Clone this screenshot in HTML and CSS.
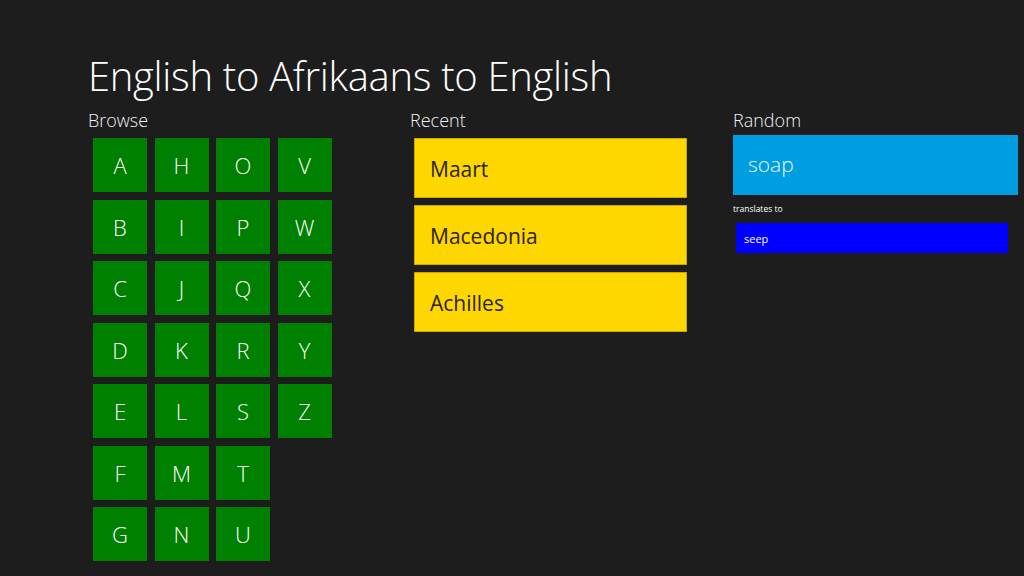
FILE: index.html
```html
<!DOCTYPE html>
<html lang="en">
<head>
    <meta charset="UTF-8">
    <title>English to Afrikaans to English</title>
    <link rel="stylesheet" href="styles.css">
</head>
<body>
    <div class="page">
        <h1 class="title">English to Afrikaans to English</h1>

        <div class="sections">
            <section class="browse">
                <h2>Browse</h2>
                <div class="letters">
                    <div class="letter">A</div><div class="letter">B</div><div class="letter">C</div><div class="letter">D</div><div class="letter">E</div><div class="letter">F</div><div class="letter">G</div>
                    <div class="letter">H</div><div class="letter">I</div><div class="letter">J</div><div class="letter">K</div><div class="letter">L</div><div class="letter">M</div><div class="letter">N</div>
                    <div class="letter">O</div><div class="letter">P</div><div class="letter">Q</div><div class="letter">R</div><div class="letter">S</div><div class="letter">T</div><div class="letter">U</div>
                    <div class="letter">V</div><div class="letter">W</div><div class="letter">X</div><div class="letter">Y</div><div class="letter">Z</div>
                </div>
            </section>

            <section class="recent">
                <h2>Recent</h2>
                <div class="word">Maart</div>
                <div class="word">Macedonia</div>
                <div class="word">Achilles</div>
            </section>

            <section class="random">
                <h2>Random</h2>
                <div class="source">soap</div>
                <div class="label">translates to</div>
                <div class="target">seep</div>
            </section>
        </div>
    </div>
</body>
</html>
```

FILE: styles.css
```css
/* Global reset */
* {
    margin: 0;
    padding: 0;
    box-sizing: border-box;
}

body {
    background: #1d1d1d;
    color: #ffffff;
    font-family: 'Open Sans', sans-serif;
    width: 1024px;
    height: 576px;
    overflow: hidden;
}

.page {
    padding: 50px 0 0 88px;
}

/* Page title */
.title {
    font-size: 40px;
    font-weight: 300;
    line-height: 52px;
    letter-spacing: -0.3px;
}

.sections {
    display: flex;
    margin-top: 6px;
}

h2 {
    font-size: 18px;
    font-weight: 300;
    line-height: 24px;
    height: 30px;
    color: #f0f0f0;
}

/* Browse grid */
.browse {
    width: 322px;
}

.letters {
    display: grid;
    grid-template-rows: repeat(7, 54px);
    grid-auto-columns: 54px;
    grid-auto-flow: column;
    gap: 7.5px;
    margin-left: 5px;
}

.letter {
    background: #008000;
    display: flex;
    align-items: center;
    justify-content: center;
    font-size: 22px;
    font-weight: 300;
}

/* Recent words */
.recent {
    width: 323px;
}

.word {
    width: 273px;
    height: 60px;
    margin: 0 0 7px 4px;
    background: #ffd700;
    border: 1px solid #c8a800;
    color: #2a2200;
    font-size: 21px;
    padding: 2px 0 0 15px;
    display: flex;
    align-items: center;
}

/* Random word */
.random {
    flex: 1;
}

.source {
    width: 285px;
    height: 60px;
    margin-top: -3px;
    background: #009ee0;
    color: #e8f6ff;
    font-size: 21px;
    font-weight: 300;
    padding: 0 0 2px 15px;
    display: flex;
    align-items: center;
}

.label {
    font-size: 8.5px;
    margin: 8px 0 0 0;
    height: 20px;
}

.target {
    width: 272px;
    height: 30px;
    margin-left: 3px;
    background: #0000ff;
    font-size: 11px;
    padding-left: 8px;
    display: flex;
    align-items: center;
}
```
